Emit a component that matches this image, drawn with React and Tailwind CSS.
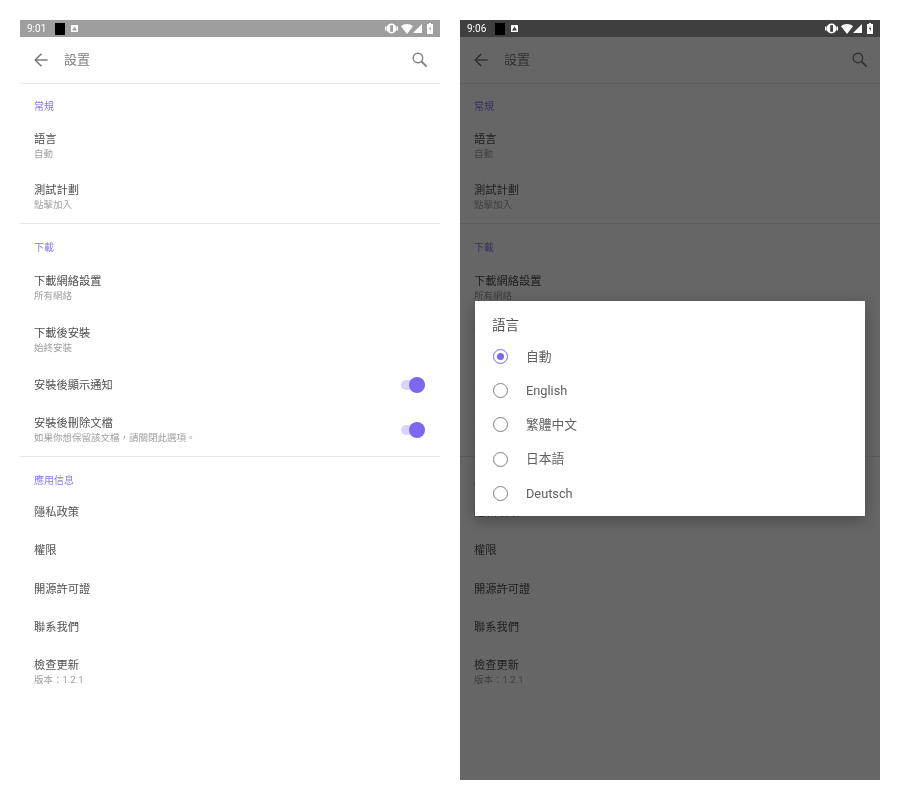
import { useState } from "react";

const font = "font-['Roboto','Noto_Sans_CJK_TC',sans-serif]";

const sections = [
  {
    label: "常規",
    labelClass: "h-[36px] pb-[6px]",
    rows: [
      { title: "語言", sub: "自動" },
      { title: "測試計劃", sub: "點擊加入" },
    ],
  },
  {
    label: "下載",
    labelClass: "h-[38.5px] pb-[7.5px]",
    rows: [
      { title: "下載網絡設置", sub: "所有網絡" },
      { title: "下載後安裝", sub: "始終安裝" },
      { title: "安裝後顯示通知", toggle: true },
      { title: "安裝後刪除文檔", sub: "如果你想保留該文檔，請關閉此選項。", toggle: true },
    ],
  },
  {
    label: "應用信息",
    labelClass: "h-[36px] pb-[4.5px]",
    rows: [
      { title: "隱私政策" },
      { title: "權限" },
      { title: "開源許可證" },
      { title: "聯系我們" },
      { title: "檢查更新", sub: "版本：1.2.1" },
    ],
  },
];

const languages = ["自動", "English", "繁體中文", "日本語", "Deutsch"];

function StatusIcons({ bg }) {
  return (
    <div className="flex items-center">
      {/* vibrate */}
      <svg width="13" height="11" viewBox="0 0 13 11" fill="white">
        <circle cx="6.5" cy="5.5" r="5" />
        <rect x="5.2" y="2.2" width="2.8" height="6.6" fill={bg} />
        <rect x="0" y="3.5" width="1.4" height="4" />
        <rect x="11.6" y="3.5" width="1.4" height="4" />
      </svg>
      {/* wifi */}
      <svg width="12" height="10" viewBox="0 0 12 10" fill="white" className="ml-[3px]">
        <path d="M0 2.2C1.6 0.8 3.7 0 6 0s4.4 0.8 6 2.2L6 10z" />
      </svg>
      {/* signal */}
      <svg width="9" height="9" viewBox="0 0 9 9" fill="white">
        <path d="M9 0v9H0z" />
      </svg>
      {/* battery */}
      <svg width="6" height="11" viewBox="0 0 6 11" className="ml-[5px]">
        <path d="M2 0h2v1h2v10H0V1h2z" fill="white" />
        <path d="M3.4 2.5 2 6h1v2.5L4.2 5H3.2z" fill={bg} />
      </svg>
    </div>
  );
}

function StatusBar({ time, dim }) {
  const bg = dim ? "#3f3f3f" : "#9e9e9e";
  return (
    <div className={`h-[17px] flex items-center justify-between px-[7px] ${dim ? "bg-[#3f3f3f]" : "bg-[#9e9e9e]"}`}>
      <div className="flex items-center">
        <span className="text-[10px] leading-none text-white w-[28px]">{time}</span>
        <div className="w-[10px] h-[12px] bg-black" />
        <svg width="7" height="7" viewBox="0 0 7 7" className="ml-[6px]">
          <rect width="7" height="7" rx="0.5" fill="white" />
          <path d="M3.5 1.5 6 5.5H1z" fill={bg} />
        </svg>
      </div>
      <StatusIcons bg={bg} />
    </div>
  );
}

function Header() {
  return (
    <div className="h-[47px] flex items-center border-b border-[#e8e8e8] pl-[11px] pr-[10px]">
      <svg width="20" height="20" viewBox="0 0 24 24" fill="none" stroke="#6e6e6e" strokeWidth="1.6">
        <path d="M20 12H5" />
        <path d="M12.5 4.5 5 12l7.5 7.5" />
      </svg>
      <span className="ml-[13px] text-[13px] text-[#808080]">設置</span>
      <svg width="20" height="20" viewBox="0 0 24 24" fill="none" stroke="#808080" strokeWidth="1.7" className="ml-auto">
        <circle cx="9.5" cy="9.5" r="5.7" />
        <path d="M13.8 13.8 20 20" strokeWidth="2.2" />
      </svg>
    </div>
  );
}

function Toggle() {
  return (
    <div className="relative w-[24px] h-[10px] rounded-full bg-[#d9d4f8]">
      <div className="absolute right-0 top-[-3px] w-[16px] h-[16px] rounded-full bg-[#7b68ee]" />
    </div>
  );
}

function Row({ title, sub, toggle }) {
  return (
    <div className={`flex items-center justify-between pl-[14px] pr-[15px] ${sub ? "h-[51.5px]" : "h-[38.5px]"}`}>
      <div className="mt-[2px]">
        <div className="text-[11.25px] leading-[14px] text-[#505050]">{title}</div>
        {sub && <div className="text-[9.5px] leading-[14px] text-[#a0a0a0]">{sub}</div>}
      </div>
      {toggle && <Toggle />}
    </div>
  );
}

function Settings() {
  return (
    <div>
      {sections.map((section, i) => (
        <div key={section.label} className={i < sections.length - 1 ? "border-b border-[#e8e8e8]" : ""}>
          <div className={`flex items-end pl-[14px] text-[10px] leading-[14px] text-[#8a7af0] ${section.labelClass}`}>
            {section.label}
          </div>
          {section.rows.map((row) => (
            <Row key={row.title} {...row} />
          ))}
        </div>
      ))}
    </div>
  );
}

function Radio({ checked }) {
  return (
    <div className={`w-[15px] h-[15px] rounded-full border-[1.5px] flex items-center justify-center ${checked ? "border-[#7b68ee]" : "border-[#808080]"}`}>
      {checked && <div className="w-[7px] h-[7px] rounded-full bg-[#7b68ee]" />}
    </div>
  );
}

function LanguageDialog({ value, onChange }) {
  return (
    <div className="absolute left-[15px] top-[281px] w-[390px] h-[215px] bg-white shadow-[0_4px_14px_rgba(0,0,0,0.3)] pt-[12px]">
      <div className="pl-[17px] text-[13.5px] leading-[24px] text-[#505050]">語言</div>
      <div className="mt-[2px]">
        {languages.map((lang) => (
          <div
            key={lang}
            onClick={() => onChange(lang)}
            className="h-[34.3px] flex items-center pl-[18px] cursor-pointer"
          >
            <Radio checked={value === lang} />
            <span className="ml-[18px] text-[12.75px] text-[#606060]">{lang}</span>
          </div>
        ))}
      </div>
    </div>
  );
}

function Phone({ time, dialog }) {
  const [lang, setLang] = useState("自動");
  return (
    <div className="relative w-[420px] h-[760px] bg-white overflow-hidden">
      <StatusBar time={time} dim={dialog} />
      <Header />
      <Settings />
      {dialog && (
        <>
          <div className="absolute inset-x-0 top-[17px] bottom-0 bg-black/60" />
          <LanguageDialog value={lang} onChange={setLang} />
        </>
      )}
    </div>
  );
}

export default function App() {
  return (
    <div className={`w-[900px] h-[800px] bg-white flex gap-5 p-5 blur-[0.4px] ${font}`}>
      <Phone time="9:01" />
      <Phone time="9:06" dialog />
    </div>
  );
}
